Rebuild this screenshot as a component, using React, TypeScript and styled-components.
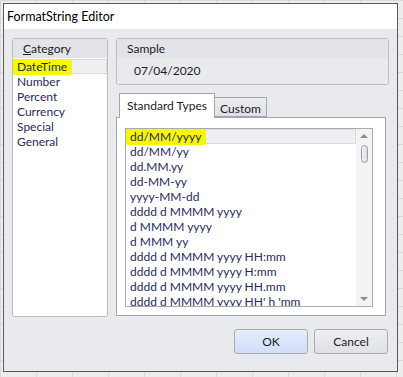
import styled, {createGlobalStyle} from "styled-components";

const FONT = `Lato, "Noto Sans", sans-serif`;

const GlobalStyle = createGlobalStyle`
  html, body {
    margin: 0;
    padding: 0;
    background: #ececec;
    font-family: ${FONT};
  }
  * {
    box-sizing: border-box;
  }
`;

const Page = styled.div`
  width: 403px;
  height: 377px;
  padding: 3px 0 0 3px;
  overflow: hidden;
  background-color: #ededed;
  background-image: linear-gradient(#d9d9d9 1px, transparent 1px),
    linear-gradient(90deg, #d9d9d9 1px, transparent 1px);
  background-size: 36px 18px;
`;

const Window = styled.div`
  width: 395px;
  height: 369px;
  border: 1px solid #5b5b5b;
  display: flex;
  flex-direction: column;
  background: #e9eaee;
`;

const TitleBar = styled.div`
  height: 25px;
  background: #ffffff;
  padding: 5px 0 0 3px;
  font-size: 12.5px;
  color: #000;
`;

const Body = styled.div`
  flex: 1;
  display: flex;
  flex-direction: column;
  padding: 9px 8px 0 8px;
`;

const Main = styled.div`
  display: flex;
  gap: 8px;
`;

const Panel = styled.div<{$height: number; $width: number}>`
  width: ${(p) => p.$width}px;
  height: ${(p) => p.$height}px;
  border: 1px solid #bcbdc2;
  border-radius: 3px;
  overflow: hidden;
  display: flex;
  flex-direction: column;
`;

const PanelHeader = styled.div`
  height: 19px;
  background: #e3e4e8;
  padding: 2px 0 0 10px;
  font-size: 12px;
  color: #1c1c28;
  flex-shrink: 0;
  u {
    text-decoration: underline;
  }
`;

const CategoryList = styled.div`
  flex: 1;
  background: #ffffff;
  padding-top: 1px;
`;

const Item = styled.div<{$selected?: boolean; $pad: number}>`
  height: 15px;
  line-height: 14px;
  font-size: 12px;
  color: #1f2b5e;
  white-space: nowrap;
  padding-left: ${(p) => p.$pad}px;
  background: ${(p) => (p.$selected ? "#efeff2" : "transparent")};
  border: 1px dotted ${(p) => (p.$selected ? "#c4c4cc" : "transparent")};
  border-left: none;
  display: flex;
  align-items: center;
`;

const Highlight = styled.span`
  background: #f7f700;
  margin-left: -4px;
  padding: 1px 5px 1px 4px;
  border-radius: 2px;
`;

const RightCol = styled.div`
  display: flex;
  flex-direction: column;
`;

const SampleValue = styled.div`
  background: #e9eaee;
  flex: 1;
  padding: 5px 0 0 17px;
  font-size: 12px;
  color: #1c1c28;
`;

const TabStrip = styled.div`
  display: flex;
  align-items: flex-end;
  height: 24px;
  margin-top: 8px;
  padding-left: 3px;
  position: relative;
  z-index: 1;
`;

const Tab = styled.div<{$active?: boolean; $width: number}>`
  width: ${(p) => p.$width}px;
  height: ${(p) => (p.$active ? 25 : 20)}px;
  margin-bottom: ${(p) => (p.$active ? -1 : 0)}px;
  padding-top: ${(p) => (p.$active ? 4 : 3)}px;
  text-align: center;
  font-size: 12px;
  color: #1c1c28;
  border: 1px solid #a5a6ab;
  border-bottom: ${(p) => (p.$active ? "none" : "1px solid #a5a6ab")};
  border-left: ${(p) => (p.$active ? "1px solid #a5a6ab" : "none")};
  background: ${(p) =>
    p.$active ? "#ffffff" : "linear-gradient(#eceef2, #dfe0e5)"};
`;

const TabPanel = styled.div`
  width: 270px;
  height: 199px;
  background: #ffffff;
  border: 1px solid #a5a6ab;
  padding: 10px 0 0 8px;
`;

const ListBox = styled.div`
  width: 248px;
  height: 179px;
  border: 1px solid #a9aab0;
  display: flex;
  overflow: hidden;
`;

const ListItems = styled.div`
  flex: 1;
  overflow: hidden;
`;

const ScrollBar = styled.div`
  width: 16px;
  background: #f2f3f5;
  display: flex;
  flex-direction: column;
  align-items: center;
  padding-top: 5px;
`;

const Arrow = styled.div<{$down?: boolean}>`
  width: 0;
  height: 0;
  border-left: 4px solid transparent;
  border-right: 4px solid transparent;
  ${(p) =>
    p.$down
      ? "border-top: 4px solid #8a8c93; margin-top: auto; margin-bottom: 5px;"
      : "border-bottom: 4px solid #8a8c93;"}
`;

const Thumb = styled.div`
  width: 7px;
  height: 18px;
  margin-top: 7px;
  border: 1px solid #9c9da3;
  border-radius: 4px;
  background: linear-gradient(90deg, #f4f4f6, #dcdde1);
`;

const ButtonRow = styled.div`
  display: flex;
  justify-content: flex-end;
  gap: 6px;
  margin-top: 12px;
  padding-right: 1px;
`;

const Button = styled.button<{$primary?: boolean}>`
  width: 74px;
  height: 25px;
  border: 1px solid #a9aab0;
  border-radius: 3px;
  font-family: ${FONT};
  font-size: 12px;
  color: #1c1c28;
  padding: 0;
  background: ${(p) =>
    p.$primary
      ? "linear-gradient(#e4ecfc, #d2def8)"
      : "linear-gradient(#eeeff2, #e0e1e5)"};
`;

const categories = ["DateTime", "Number", "Percent", "Currency", "Special", "General"];

const formats = [
  "dd/MM/yyyy",
  "dd/MM/yy",
  "dd.MM.yy",
  "dd-MM-yy",
  "yyyy-MM-dd",
  "dddd d MMMM yyyy",
  "d MMMM yyyy",
  "d MMM yy",
  "dddd d MMMM yyyy HH:mm",
  "dddd d MMMM yyyy H:mm",
  "dddd d MMMM yyyy HH.mm",
  "dddd d MMMM yyyy HH' h 'mm",
];

export default function App() {
  return (
    <>
      <GlobalStyle />
      <Page>
        <Window>
          <TitleBar>FormatString Editor</TitleBar>
          <Body>
            <Main>
              <Panel $width={96} $height={279}>
                <PanelHeader>
                  <u>C</u>ategory
                </PanelHeader>
                <CategoryList>
                  {categories.map((c, i) => (
                    <Item key={c} $pad={4} $selected={i === 0}>
                      {i === 0 ? <Highlight>{c}</Highlight> : c}
                    </Item>
                  ))}
                </CategoryList>
              </Panel>
              <RightCol>
                <Panel $width={273} $height={47}>
                  <PanelHeader>Sample</PanelHeader>
                  <SampleValue>07/04/2020</SampleValue>
                </Panel>
                <TabStrip>
                  <Tab $active $width={96}>Standard Types</Tab>
                  <Tab $width={52}>Custom</Tab>
                </TabStrip>
                <TabPanel>
                  <ListBox>
                    <ListItems>
                      {formats.map((f, i) => (
                        <Item key={f} $pad={4} $selected={i === 0}>
                          {i === 0 ? <Highlight>{f}</Highlight> : f}
                        </Item>
                      ))}
                    </ListItems>
                    <ScrollBar>
                      <Arrow />
                      <Thumb />
                      <Arrow $down />
                    </ScrollBar>
                  </ListBox>
                </TabPanel>
              </RightCol>
            </Main>
            <ButtonRow>
              <Button $primary>OK</Button>
              <Button>Cancel</Button>
            </ButtonRow>
          </Body>
        </Window>
      </Page>
    </>
  );
}
